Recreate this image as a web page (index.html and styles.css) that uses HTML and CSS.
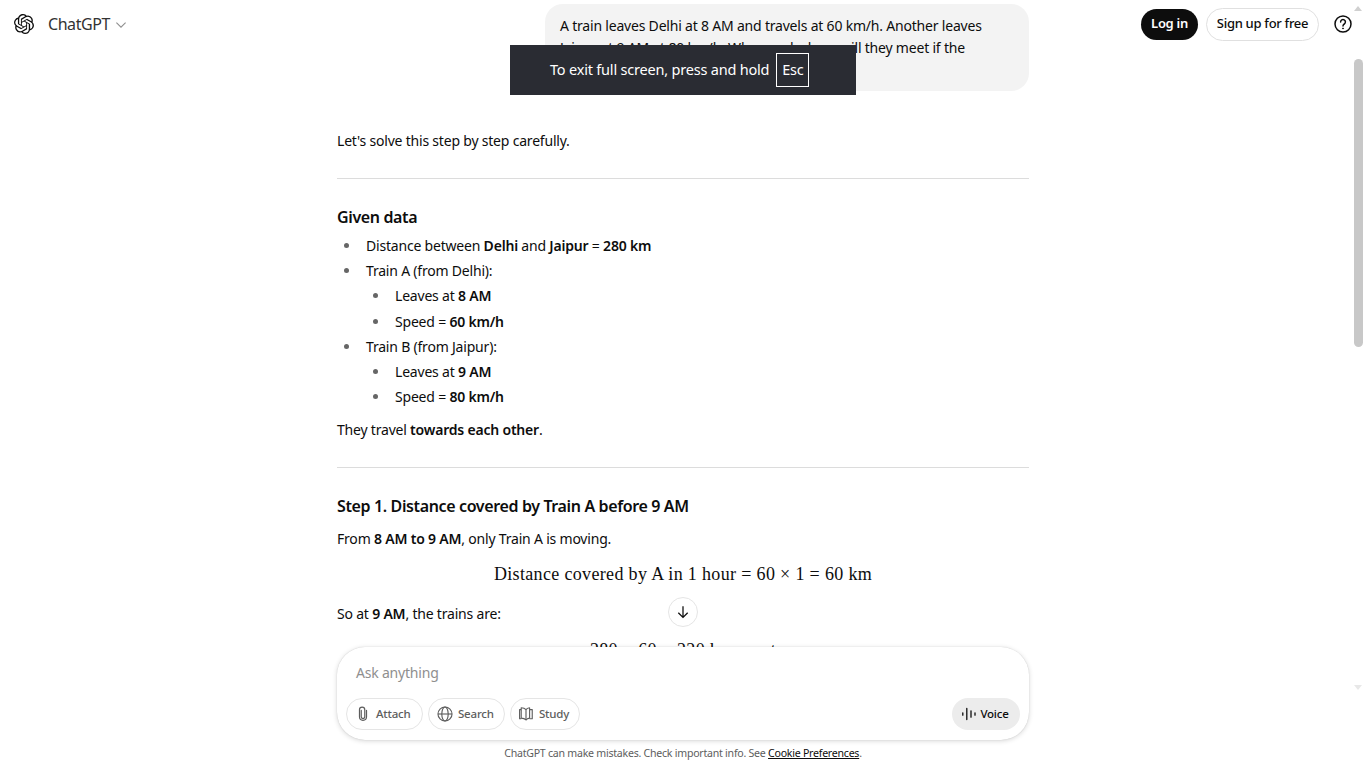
FILE: index.html
```html
<!DOCTYPE html>
<html lang="en">
<head>
    <meta charset="UTF-8">
    <title>ChatGPT</title>
    <link rel="stylesheet" href="styles.css">
</head>
<body>
    <header class="topbar">
        <div class="brand">
            <svg class="logo" viewBox="0 0 24 24" width="20" height="20" fill="#0d0d0d"><path d="M22.2819 9.8211a5.9847 5.9847 0 0 0-.5157-4.9108 6.0462 6.0462 0 0 0-6.5098-2.9A6.0651 6.0651 0 0 0 4.9807 4.1818a5.9847 5.9847 0 0 0-3.9977 2.9 6.0462 6.0462 0 0 0 .7427 7.0966 5.98 5.98 0 0 0 .511 4.9107 6.051 6.051 0 0 0 6.5146 2.9001A5.9847 5.9847 0 0 0 13.2599 24a6.0557 6.0557 0 0 0 5.7718-4.2058 5.9894 5.9894 0 0 0 3.9977-2.9001 6.0557 6.0557 0 0 0-.7475-7.0729zm-9.022 12.6081a4.4755 4.4755 0 0 1-2.8764-1.0408l.1419-.0804 4.7783-2.7582a.7948.7948 0 0 0 .3927-.6813v-6.7369l2.02 1.1686a.071.071 0 0 1 .038.052v5.5826a4.504 4.504 0 0 1-4.4945 4.4944zm-9.6607-4.1254a4.4708 4.4708 0 0 1-.5346-3.0137l.142.0852 4.783 2.7582a.7712.7712 0 0 0 .7806 0l5.8428-3.3685v2.3324a.0804.0804 0 0 1-.0332.0615L9.74 19.9502a4.4992 4.4992 0 0 1-6.1408-1.6464zM2.3408 7.8956a4.485 4.485 0 0 1 2.3655-1.9728V11.6a.7664.7664 0 0 0 .3879.6765l5.8144 3.3543-2.0201 1.1685a.0757.0757 0 0 1-.071 0l-4.8303-2.7865A4.504 4.504 0 0 1 2.3408 7.872zm16.5963 3.8558L13.1038 8.364 15.1192 7.2a.0757.0757 0 0 1 .071 0l4.8303 2.7913a4.4944 4.4944 0 0 1-.6765 8.1042v-5.6772a.79.79 0 0 0-.407-.667zm2.0107-3.0231l-.142-.0852-4.7735-2.7818a.7759.7759 0 0 0-.7854 0L9.409 9.2297V6.8974a.0662.0662 0 0 1 .0284-.0615l4.8303-2.7866a4.4992 4.4992 0 0 1 6.6802 4.66zM8.3065 12.863l-2.02-1.1638a.0804.0804 0 0 1-.038-.0567V6.0742a4.4992 4.4992 0 0 1 7.3757-3.4537l-.142.0805L8.704 5.459a.7948.7948 0 0 0-.3927.6813zm1.0976-2.3654l2.602-1.4998 2.6069 1.4998v2.9994l-2.5974 1.4997-2.6067-1.4997Z"/></svg>
            <span class="brand-name">ChatGPT</span>
            <svg class="chevron" viewBox="0 0 10 6" width="10" height="6" fill="none" stroke="#8f8f8f" stroke-width="1.100"><path d="M.4.6L5 5.200 9.600.6"/></svg>
        </div>
        <div class="actions">
            <button class="btn-login">Log in</button>
            <button class="btn-signup">Sign up for free</button>
            <svg class="help" viewBox="0 0 20 20" width="20" height="20" fill="none" stroke="#0d0d0d" stroke-width="1.5"><circle cx="10" cy="10" r="8"/><path d="M7.6 8a2.4 2.4 0 1 1 3.7 2c-.8.5-1.3 1-1.3 1.9" stroke-linecap="round"/><circle cx="10" cy="14.4" r=".5" fill="#0d0d0d" stroke-width="1"/></svg>
        </div>
    </header>

    <main class="thread">
        <div class="column">
            <div class="bubble">A train leaves Delhi at 8 AM and travels at 60 km/h. Another leaves Jaipur at 9 AM at 80 km/h. When and where will they meet if the distance is 280 km?</div>

            <p class="intro">Let's solve this step by step carefully.</p>
            <hr>
            <h3>Given data</h3>
            <ul>
                <li>Distance between <b>Delhi</b> and <b>Jaipur</b> = <b>280 km</b></li>
                <li>Train A (from Delhi):
                    <ul>
                        <li>Leaves at <b>8 AM</b></li>
                        <li>Speed = <b>60 km/h</b></li>
                    </ul>
                </li>
                <li>Train B (from Jaipur):
                    <ul>
                        <li>Leaves at <b>9 AM</b></li>
                        <li>Speed = <b>80 km/h</b></li>
                    </ul>
                </li>
            </ul>
            <p class="after-list">They travel <b>towards each other</b>.</p>
            <hr>
            <h3>Step 1. Distance covered by Train A before 9 AM</h3>
            <p class="step-text">From <b>8 AM to 9 AM</b>, only Train A is moving.</p>
            <div class="math">Distance covered by A in 1 hour = 60 × 1 = 60 km</div>
            <p class="step-after">So at <b>9 AM</b>, the trains are:</p>
            <div class="math math-last">280 − 60 = 220 km apart</div>
        </div>
    </main>

    <button class="to-bottom">
        <svg viewBox="0 0 20 20" width="18" height="18" fill="none" stroke="#0d0d0d" stroke-width="1.4"><path d="M10 3.5v12.5M4.8 10.8L10 16l5.200-5.200"/></svg>
    </button>

    <section class="bottom">
        <div class="composer">
            <div class="placeholder">Ask anything</div>
            <div class="tools">
                <div class="tool-left">
                    <button class="tool tool-attach">
                        <svg viewBox="0 0 20 20" width="16" height="16" fill="none" stroke="#5d5d5d" stroke-width="1.5" stroke-linecap="round"><path d="M7.800 5.500v8a2.200 2.200 0 0 0 4.400 0V4.800a3.300 3.300 0 0 0-6.600 0v8.700a4.400 4.400 0 0 0 8.800 0V5.500"/></svg>
                        Attach
                    </button>
                    <button class="tool tool-search">
                        <svg viewBox="0 0 20 20" width="16" height="16" fill="none" stroke="#5d5d5d" stroke-width="1.4"><circle cx="10" cy="10" r="8.800"/><ellipse cx="10" cy="10" rx="4" ry="8.800"/><path d="M1.200 10h17.600"/></svg>
                        Search
                    </button>
                    <button class="tool tool-study">
                        <svg viewBox="0 0 20 20" width="16" height="16" fill="none" stroke="#5d5d5d" stroke-width="1.400" stroke-linejoin="round"><path d="M10 4.500C8.500 2.800 6.500 2.200 4 2.200v13c2.500 0 4.500.6 6 2.300z"/><path d="M10 4.500c1-1.300 2.500-2 4.500-2.300v13c-2 .3-3.500 1-4.500 2.300"/><path d="M14.500 4.500h3.300v11.500h-3.300"/><path d="M4 4.500H2v11.500h2"/></svg>
                        Study
                    </button>
                </div>
                <button class="voice">
                    <svg viewBox="0 0 16 16" width="16" height="16" fill="none" stroke="#0d0d0d" stroke-width="1.3" stroke-linecap="round"><path d="M1.800 6.800v2.400M5.800 2.500v11M10 4.800v6.400M14 6.800v2.400"/></svg>
                    Voice
                </button>
            </div>
        </div>
        <div class="note">ChatGPT can make mistakes. Check important info. See <a href="#">Cookie Preferences</a>.</div>
    </section>

    <div class="toast">
        <span>To exit full screen, press and hold</span>
        <span class="key">Esc</span>
    </div>

    <!-- scrollbar, drawn because the page itself does not scroll -->
    <div class="scroll-up"></div>
    <div class="scroll-thumb"></div>
    <div class="scroll-down"></div>
</body>
</html>
```

FILE: styles.css
```css
* {
    margin: 0;
    padding: 0;
    box-sizing: border-box;
}
html, body {
    height: 100%;
}
body {
    display: flex;
    flex-direction: column;
    overflow: hidden;
    background: white;
    color: #0d0d0d;
    font-family: "Noto Sans", sans-serif;
    font-size: 14px;
    letter-spacing: -0.2px;
}
button {
    font-family: inherit;
    letter-spacing: inherit;
    cursor: pointer;
}
b {
    font-weight: 600;
    letter-spacing: -0.2px;
}
.topbar {
    position: absolute;
    top: 0;
    left: 0;
    right: 0;
    height: 48px;
    display: flex;
    justify-content: space-between;
    align-items: center;
    padding: 0 13px 0 14px;
}
.brand {
    display: flex;
    align-items: center;
}
.brand-name {
    margin-left: 14px;
    font-size: 16px;
    letter-spacing: -0.45px;
    color: #333;
}
.chevron {
    margin-left: 6px;
    margin-top: 1px;
}
.actions {
    display: flex;
    align-items: center;
}
.btn-login {
    width: 57px;
    height: 31px;
    padding-bottom: 2px;
    background: #0d0d0d;
    color: white;
    border: none;
    border-radius: 16px;
    font-size: 13px;
    font-weight: 600;
    letter-spacing: -0.3px;
}
.btn-signup {
    width: 113px;
    height: 33px;
    margin-left: 8px;
    padding-bottom: 2px;
    background: white;
    color: #0d0d0d;
    border: 1px solid #e0e0e0;
    border-radius: 17px;
    font-size: 13px;
    font-weight: 500;
    letter-spacing: -0.3px;
}
.help {
    margin-left: 14px;
}
.thread {
    flex: 1;
    min-height: 0;
    overflow: hidden;
    padding-top: 4px;
}
.column {
    width: 692px;
    margin-left: 337px;
}
.bubble {
    width: 484px;
    margin-left: auto;
    padding: 11px 15px 10px;
    background: #f3f3f3;
    border-radius: 18px;
    line-height: 22px;
}
p, .math, h3 {
    line-height: 24px;
}
.intro {
    margin-top: 38px;
}
hr {
    border: none;
    border-top: 1px solid #dcdcdc;
    margin: 25px 0 26px;
}
h3 {
    font-size: 16px;
    font-weight: 600;
    letter-spacing: -0.37px;
}
ul {
    list-style: none;
    padding-left: 29px;
}
li {
    position: relative;
    line-height: 25.2px;
}
li::before {
    content: "";
    position: absolute;
    left: -22px;
    top: 10px;
    width: 5px;
    height: 5px;
    background: #666;
    border-radius: 50%;
}
.column > ul {
    margin-top: 4px;
}
.after-list {
    margin-top: 9px;
}
.step-text {
    margin-top: 9px;
}
.math {
    margin-top: 11px;
    text-align: center;
    font-family: "Liberation Serif", serif;
    font-size: 18px;
    letter-spacing: 0.34px;
}
.step-after {
    margin-top: 16px;
}
.math-last {
    margin-top: 12px;
}
.to-bottom {
    position: absolute;
    left: 668px;
    top: 597px;
    width: 30px;
    height: 30px;
    display: flex;
    align-items: center;
    justify-content: center;
    background: white;
    border: 1px solid #e5e5e5;
    border-radius: 50%;
}
.bottom {
    height: 121px;
    flex-shrink: 0;
}
.composer {
    width: 692px;
    height: 93px;
    margin-left: 337px;
    padding: 16px 9px 10px;
    background: white;
    border-radius: 28px;
    box-shadow: 0 1px 5px rgba(0, 0, 0, 0.16), 0 0 1px rgba(0, 0, 0, 0.2);
}
.placeholder {
    padding-left: 10px;
    color: #8f8f8f;
    line-height: 20px;
}
.tools {
    margin-top: 15px;
    display: flex;
    justify-content: space-between;
}
.tool-left {
    display: flex;
    gap: 5px;
}
.tool {
    height: 32px;
    display: flex;
    align-items: center;
    gap: 5px;
    padding-left: 8px;
    padding-bottom: 1px;
    background: white;
    color: #5d5d5d;
    border: 1px solid #e5e5e5;
    border-radius: 16px;
    font-size: 11.5px;
    font-weight: 500;
}
.tool-attach, .tool-search {
    width: 77px;
}
.tool-study {
    width: 70px;
    padding-left: 7px;
}
.voice {
    width: 68px;
    height: 32px;
    display: flex;
    align-items: center;
    justify-content: center;
    gap: 3px;
    padding-right: 2px;
    padding-bottom: 1px;
    background: #ececec;
    color: #0d0d0d;
    border: none;
    border-radius: 16px;
    font-size: 11.5px;
    font-weight: 500;
}
.note {
    margin-top: 5px;
    text-align: center;
    font-size: 10.6px;
    line-height: 16px;
    letter-spacing: -0.25px;
    color: #5d5d5d;
}
.note a {
    color: #0d0d0d;
}
.toast {
    position: absolute;
    left: 510px;
    top: 45px;
    width: 346px;
    height: 50px;
    display: flex;
    align-items: center;
    padding-left: 40px;
    gap: 7px;
    background: #2a2c33;
    color: white;
    font-size: 14.5px;
}
.toast span:first-child {
    padding-bottom: 2px;
}
.key {
    height: 34px;
    width: 33px;
    display: flex;
    align-items: center;
    justify-content: center;
    padding-bottom: 2px;
    border: 1px solid white;
}
.scroll-up {
    position: absolute;
    left: 1354px;
    top: 6px;
    border: 4.5px solid transparent;
    border-top: none;
    border-bottom: 5px solid #d0d0d0;
}
.scroll-thumb {
    position: absolute;
    left: 1354px;
    top: 59px;
    width: 9px;
    height: 288px;
    background: #c8c8c8;
    border-radius: 5px;
}
.scroll-down {
    position: absolute;
    left: 1354px;
    top: 685px;
    border: 4.5px solid transparent;
    border-bottom: none;
    border-top: 5px solid #e8e8e8;
}
```
